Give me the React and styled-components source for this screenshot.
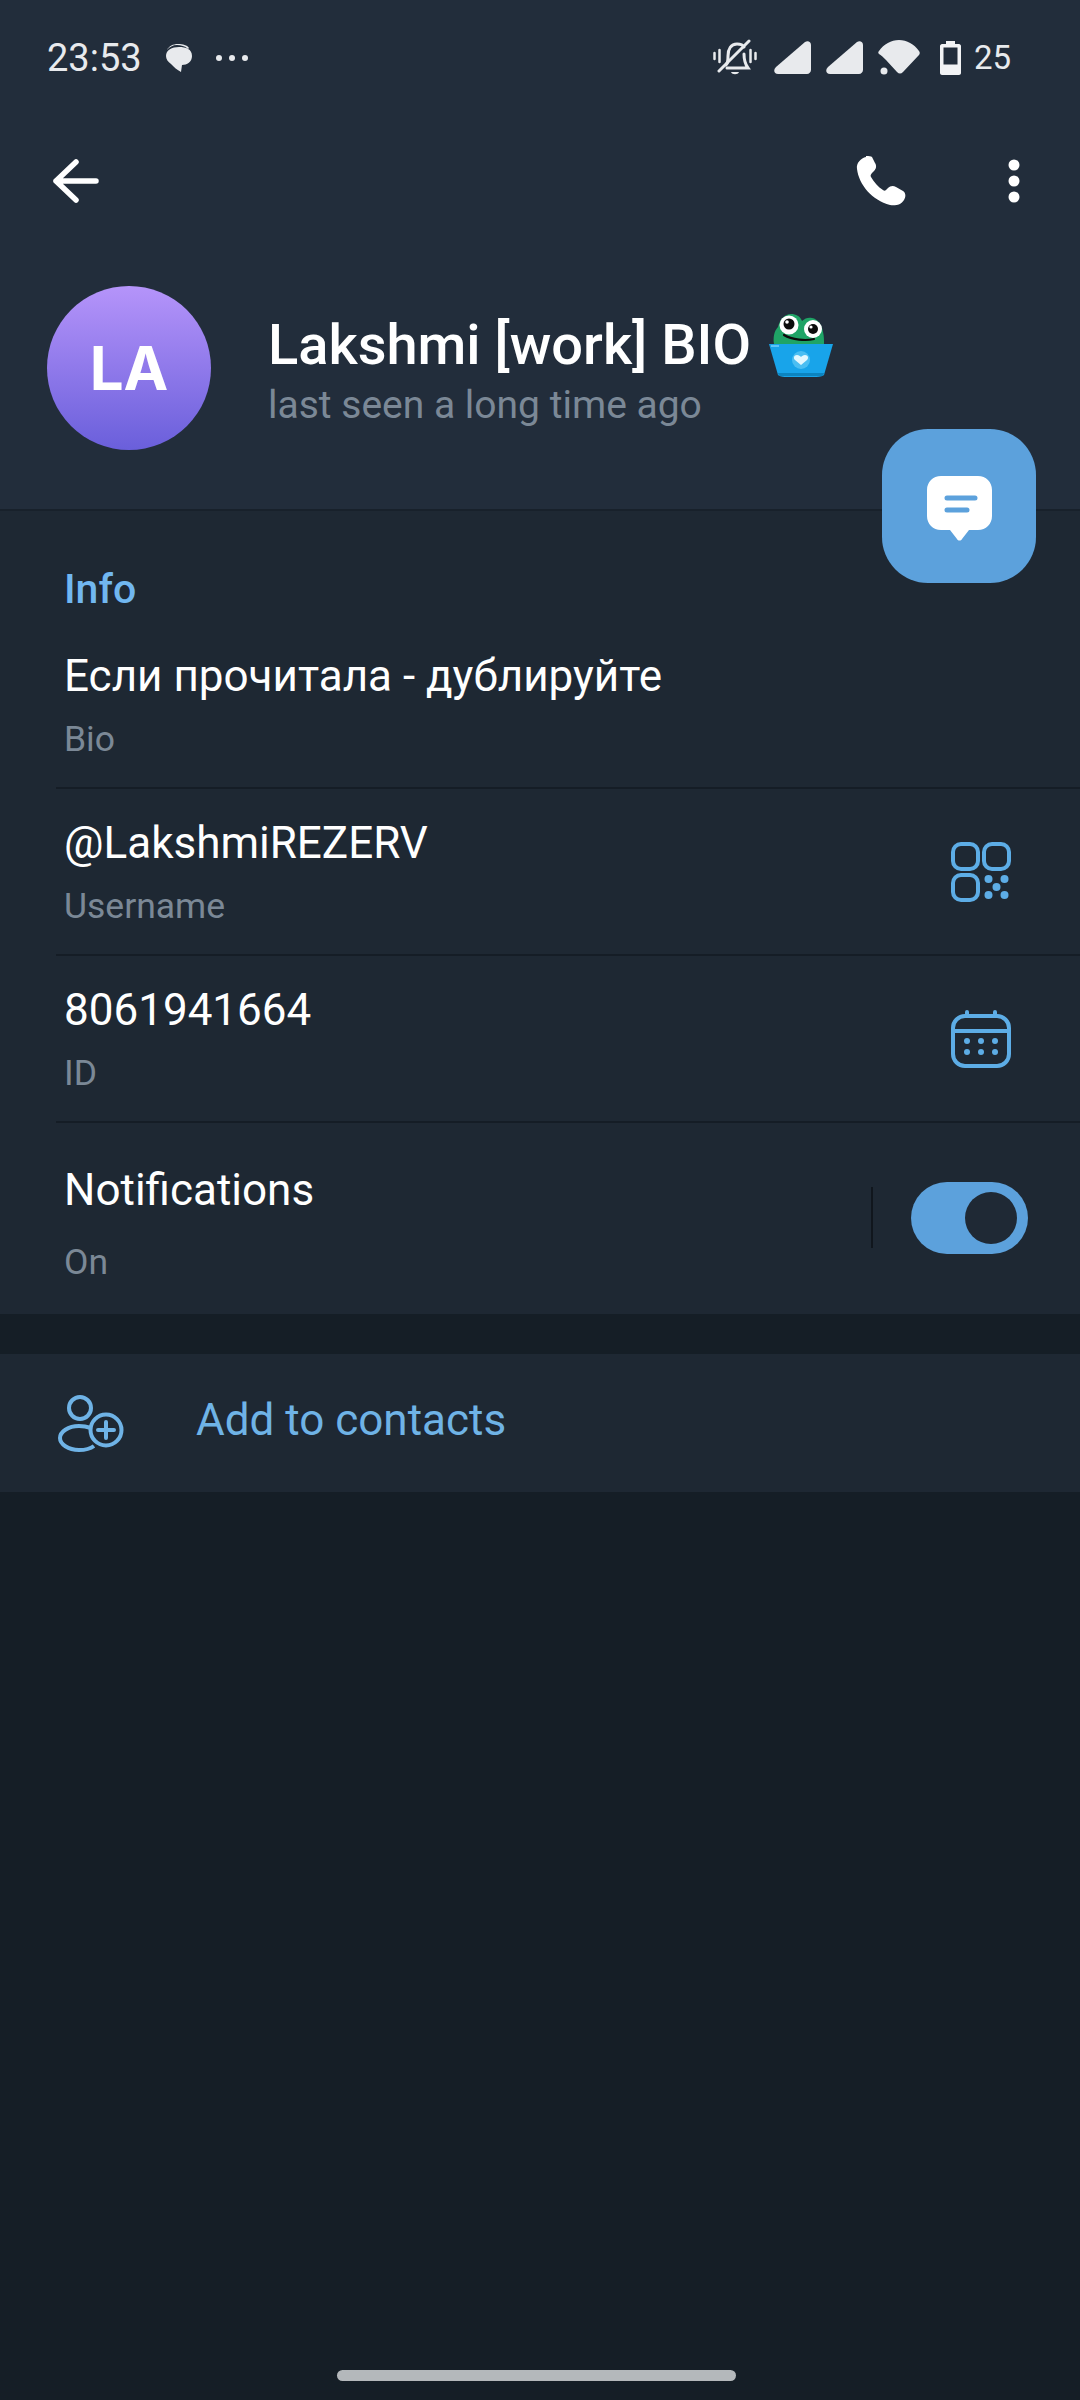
import React from 'react'
import styled, { createGlobalStyle } from 'styled-components'

const GlobalStyle = createGlobalStyle`
  html, body {
    margin: 0;
    padding: 0;
    background: #151e26;
    font-family: Roboto, "Noto Sans CJK SC", sans-serif;
  }
`

function BubbleIcon() {
  return (
    <svg width="30" height="30" viewBox="0 0 30 30">
      <path d="M3 7c2-4 6-6 11-6 5 0 9 1 11 4l-1 1C21 3 17 2 13 2 9 2 5 4 3 7z" fill="#e8eaed" />
      <path d="M15 4c7 0 13 2 13 9 0 6-5 9-10 9l-1 7c-4-2-7-5-10-8C4 19 2 16 2 13c0-6 6-9 13-9z" fill="#e8eaed" />
    </svg>
  )
}

function MuteBellIcon() {
  return (
    <svg width="44" height="38" viewBox="0 0 44 38" fill="none" stroke="#e8eaed" strokeWidth="3" strokeLinecap="round">
      <path d="M1.5 14v6M6.5 11v12M37.5 11v12M42.5 14v6" strokeWidth="2.5" />
      <path d="M13 26c2-2 2-4 2-9 0-7 3-12 9-12 3 0 6 1 7 3" />
      <path d="M31 15c0 5 1 10 4 14H14" />
      <path d="M36 2L6 32" />
      <path d="M18 33c1 3 7 3 8 0z" fill="#e8eaed" stroke="none" />
    </svg>
  )
}

function SignalIcon() {
  return (
    <svg width="37" height="33" viewBox="0 0 37 33">
      <path d="M31 1c3-2 6 0 6 3v25c0 2-2 4-4 4H4c-4 0-5-4-2-7z" fill="#e8eaed" />
    </svg>
  )
}

function WifiIcon() {
  return (
    <svg width="42" height="35" viewBox="0 0 42 35">
      <path d="M1 11C6 4 13 0 21 0s15 4 20 11c1 1 1 3 0 4L25 32c-2 2-4 2-6 0L8 20C5 17 3 15 1 14c-1-1-1-2 0-3z" fill="#e8eaed" />
      <circle cx="6" cy="31" r="3.5" fill="#e8eaed" />
    </svg>
  )
}

function BatteryIcon() {
  return (
    <svg width="21" height="34" viewBox="0 0 21 34">
      <path d="M6 0h9v3h4c1 0 2 1 2 2v27c0 1-1 2-2 2H2c-1 0-2-1-2-2V5c0-1 1-2 2-2h4z" fill="#f2f3f5" />
      <rect x="3.5" y="6.5" width="14" height="17" fill="#222d3b" />
    </svg>
  )
}

function BackIcon() {
  return (
    <svg width="46" height="44" viewBox="0 0 46 44" fill="none" stroke="#fff" strokeWidth="5.5" strokeLinecap="round" strokeLinejoin="round">
      <path d="M43 22H3M23 3L3 22l20 19" />
    </svg>
  )
}

function PhoneIcon() {
  return (
    <svg width="50" height="50" viewBox="0 0 50 50">
      <path d="M10 1C5 2 0 7 1 13c2 16 15 31 33 36 5 1 11 0 14-5 2-3 2-7-1-9l-7-4c-3-2-6-1-8 1l-2 2c-1 1-2 1-3 0-5-3-9-8-12-13-1-1 0-3 1-4l2-2c2-2 3-5 1-8l-3-6c-1-1-3-1-6-1z" fill="#fff" />
    </svg>
  )
}

function MoreIcon() {
  return (
    <svg width="12" height="44" viewBox="0 0 12 44" fill="#fff">
      <circle cx="6" cy="6" r="5.5" />
      <circle cx="6" cy="22" r="5.5" />
      <circle cx="6" cy="38" r="5.5" />
    </svg>
  )
}

function FrogLaptop() {
  return (
    <svg width="64" height="64" viewBox="0 0 64 64">
      <path d="M5 31c-1-6 0-13 4-17 2-8 7-13 13-13 5 0 9 2 11 7 3-3 7-4 10-3 6 1 10 7 11 14 1 4 1 8 1 12z" fill="#1fa466" />
      <circle cx="20" cy="12" r="9.5" fill="#fff" />
      <circle cx="44" cy="16" r="9" fill="#fff" />
      <circle cx="20" cy="11" r="5.5" fill="#0c0c0c" />
      <circle cx="44" cy="16" r="5" fill="#0c0c0c" />
      <circle cx="18" cy="9" r="1.8" fill="#fff" />
      <circle cx="42" cy="14" r="1.6" fill="#fff" />
      <path d="M15 22c8 5 22 6 30 4" fill="none" stroke="#0c0c0c" strokeWidth="2.2" strokeLinecap="round" />
      <path d="M0 31h64l-9 31c-3 2-7 2-10 2H18c-3 0-6 0-9-2z" fill="#18a4ea" />
      <path d="M9 60h46l-1 3H10z" fill="#0c84c0" />
      <path d="M2 33h8" stroke="#8fdcff" strokeWidth="1.2" />
      <circle cx="32" cy="47" r="9" fill="#6ed0f6" opacity="0.6" />
      <path d="M32 52l-6-5c-2-2-1-5 2-5 2 0 3 1 4 2 1-1 2-2 4-2 3 0 4 3 2 5z" fill="#e4f8ff" />
    </svg>
  )
}

function ChatIcon() {
  return (
    <svg width="65" height="65" viewBox="0 0 65 65">
      <path d="M14 0h37c8 0 14 6 14 14v26c0 8-6 14-14 14H42l-7 9c-1 2-4 2-5 0l-7-9h-9C6 54 0 48 0 40V14C0 6 6 0 14 0z" fill="#fff" />
      <path d="M20 22h28M20 34h20" stroke="#5ca1dc" strokeWidth="5" strokeLinecap="round" />
    </svg>
  )
}

function QrIcon() {
  return (
    <svg width="60" height="60" viewBox="0 0 60 60" fill="none" stroke="#5dade6" strokeWidth="4">
      <rect x="2" y="2" width="25" height="25" rx="8" />
      <rect x="33" y="2" width="25" height="25" rx="8" />
      <rect x="2" y="33" width="25" height="25" rx="8" />
      <g fill="#5dade6" stroke="none">
        <circle cx="37.5" cy="37" r="4" />
        <circle cx="53.5" cy="37" r="4" />
        <circle cx="45.5" cy="45" r="4" />
        <circle cx="37.5" cy="53" r="4" />
        <circle cx="53.5" cy="53" r="4" />
      </g>
    </svg>
  )
}

function CalendarIcon() {
  return (
    <svg width="60" height="58" viewBox="0 0 60 58" fill="none" stroke="#5dade6" strokeWidth="4" strokeLinecap="round">
      <rect x="2" y="6" width="56" height="50" rx="12" />
      <path d="M2 21h56M16 2v4M44 2v4" />
      <g fill="#5dade6" stroke="none">
        <circle cx="16" cy="31" r="3" />
        <circle cx="30" cy="31" r="3" />
        <circle cx="44" cy="31" r="3" />
        <circle cx="16" cy="42" r="3" />
        <circle cx="30" cy="42" r="3" />
        <circle cx="44" cy="42" r="3" />
      </g>
    </svg>
  )
}

function AddUserIcon() {
  return (
    <svg width="66" height="57" viewBox="0 0 66 57" fill="none" stroke="#6fb3e6" strokeWidth="4">
      <circle cx="22" cy="13" r="11" />
      <path d="M33 33c-3-1-7-2-12-2C10 31 2 37 2 43s8 12 19 12c6 0 11-1 15-4" />
      <circle cx="48" cy="35" r="15.5" />
      <path d="M48 27v16M40 35h16" strokeLinecap="round" />
    </svg>
  )
}

export default function App() {
  return (
    <Page>
      <GlobalStyle />
      <Header>
        <StatusBar>
          <StatusLeft>
            <Clock>23:53</Clock>
            <BubbleIcon />
            <Dots>
              <Dot />
              <Dot />
              <Dot />
            </Dots>
          </StatusLeft>
          <StatusRight>
            <MuteBellIcon />
            <Signals>
              <SignalIcon />
              <SignalIcon />
              <WifiIcon />
            </Signals>
            <BatteryIcon />
            <BatteryText>25</BatteryText>
          </StatusRight>
        </StatusBar>
        <Toolbar>
          <BackIcon />
          <ToolbarActions>
            <PhoneIcon />
            <MoreIcon />
          </ToolbarActions>
        </Toolbar>
        <Profile>
          <Avatar>LA</Avatar>
          <ProfileText>
            <Name>
              Lakshmi [work] BIO
              <FrogLaptop />
            </Name>
            <LastSeen>last seen a long time ago</LastSeen>
          </ProfileText>
        </Profile>
        <Fab>
          <ChatIcon />
        </Fab>
      </Header>

      <Section>
        <SectionTitle>Info</SectionTitle>
        <Row>
          <RowText>
            <Main>Если прочитала - дублируйте</Main>
            <Sub>Bio</Sub>
          </RowText>
        </Row>
        <Row>
          <RowText>
            <Main>@LakshmiREZERV</Main>
            <Sub>Username</Sub>
          </RowText>
          <RowIcon>
            <QrIcon />
          </RowIcon>
        </Row>
        <Row>
          <RowText>
            <Main>8061941664</Main>
            <Sub>ID</Sub>
          </RowText>
          <RowIcon>
            <CalendarIcon />
          </RowIcon>
        </Row>
        <Row $last>
          <RowText $spread>
            <Main>Notifications</Main>
            <Sub>On</Sub>
          </RowText>
          <ToggleWrap>
            <VLine />
            <Toggle>
              <Knob />
            </Toggle>
          </ToggleWrap>
        </Row>
      </Section>

      <AddRow>
        <AddUserIcon />
        <AddText>Add to contacts</AddText>
      </AddRow>

      <HomeBar />
    </Page>
  )
}

const Page = styled.div`
  width: 1080px;
  height: 2400px;
  display: flex;
  flex-direction: column;
  background: #151e26;
  overflow: hidden;
`
const Header = styled.header`
  position: relative;
  background: #222d3b;
  height: 509px;
  flex: none;
  border-bottom: 2px solid #18212b;
`
const StatusBar = styled.div`
  height: 115px;
  display: flex;
  justify-content: space-between;
  align-items: center;
  padding: 0 69px 0 47px;
`
const StatusLeft = styled.div`
  display: flex;
  align-items: center;
  gap: 22px;
  color: #e8eaed;
`
const Clock = styled.span`
  font-size: 38px;
  color: #e8eaed;
`
const Dots = styled.span`
  display: flex;
  gap: 7px;
`
const Dot = styled.i`
  width: 6px;
  height: 6px;
  border-radius: 50%;
  background: #e8eaed;
`
const StatusRight = styled.div`
  display: flex;
  align-items: center;
`
const Signals = styled.div`
  display: flex;
  align-items: center;
  gap: 15px;
  margin: 0 20px 0 17px;
`
const BatteryText = styled.span`
  font-size: 33px;
  color: #e8eaed;
  margin-left: 13px;
`
const Toolbar = styled.div`
  height: 132px;
  display: flex;
  justify-content: space-between;
  align-items: center;
  padding: 0 60px 0 53px;
`
const ToolbarActions = styled.div`
  display: flex;
  align-items: center;
  gap: 102px;
`
const Profile = styled.div`
  display: flex;
  padding: 39px 0 0 47px;
`
const Avatar = styled.div`
  width: 164px;
  height: 164px;
  border-radius: 50%;
  background: linear-gradient(180deg, #b594fa, #6a5fdb);
  color: #fff;
  font-size: 60px;
  font-weight: 700;
  font-family: Inter, Roboto, sans-serif;
  display: flex;
  align-items: center;
  justify-content: center;
`
const ProfileText = styled.div`
  margin-left: 57px;
  display: flex;
  flex-direction: column;
`
const Name = styled.div`
  display: flex;
  align-items: center;
  gap: 18px;
  height: 64px;
  margin-top: 27px;
  font-size: 56px;
  font-weight: 500;
  color: #fff;
`
const LastSeen = styled.div`
  font-size: 39px;
  line-height: 48px;
  color: #7b8896;
  margin-top: 4px;
`
const Fab = styled.div`
  position: absolute;
  right: 44px;
  bottom: -74px;
  width: 154px;
  height: 154px;
  border-radius: 46px;
  background: #5ca1dc;
  display: flex;
  align-items: center;
  justify-content: center;
  padding-top: 4px;
  box-sizing: border-box;
`
const Section = styled.section`
  background: #1e2833;
  flex: none;
  margin-bottom: 40px;
`
const SectionTitle = styled.div`
  height: 40px;
  padding: 58px 64px 13px;
  line-height: 40px;
  font-size: 41px;
  font-weight: 500;
  color: #71b7f0;
`
const Row = styled.div`
  margin-left: 56px;
  padding-right: 69px;
  height: ${p => (p.$last ? '191px' : '165px')};
  display: flex;
  align-items: ${p => (p.$last ? 'flex-start' : 'center')};
  justify-content: space-between;
  border-bottom: ${p => (p.$last ? 'none' : '2px solid #151d26')};
`
const RowText = styled.div`
  display: flex;
  flex-direction: column;
  margin-left: 8px;
  padding-top: ${p => (p.$spread ? '36px' : '6px')};
  gap: ${p => (p.$spread ? '9px' : '0')};
`
const Main = styled.div`
  font-size: 44px;
  line-height: 63px;
  color: #fff;
`
const Sub = styled.div`
  font-size: 35.5px;
  line-height: 63px;
  color: #7b8896;
`
const RowIcon = styled.div`
  display: flex;
`
const ToggleWrap = styled.div`
  display: flex;
  align-items: center;
  gap: 38px;
  height: 189px;
  margin-right: -17px;
`
const VLine = styled.div`
  width: 2px;
  height: 61px;
  background: #10161d;
`
const Toggle = styled.div`
  width: 117px;
  height: 72px;
  border-radius: 36px;
  background: #5ca1dc;
  display: flex;
  align-items: center;
  justify-content: flex-end;
  padding-right: 11px;
  box-sizing: border-box;
`
const Knob = styled.div`
  width: 52px;
  height: 52px;
  border-radius: 50%;
  background: #1f2935;
`
const AddRow = styled.div`
  height: 138px;
  flex: none;
  background: #1e2833;
  display: flex;
  align-items: center;
  padding-left: 58px;
  gap: 72px;
`
const AddText = styled.span`
  font-size: 44px;
  color: #6fb3e6;
  padding-bottom: 6px;
`
const HomeBar = styled.div`
  width: 399px;
  height: 11px;
  border-radius: 6px;
  background: #b4b8bb;
  margin: auto 0 19px 337px;
`
